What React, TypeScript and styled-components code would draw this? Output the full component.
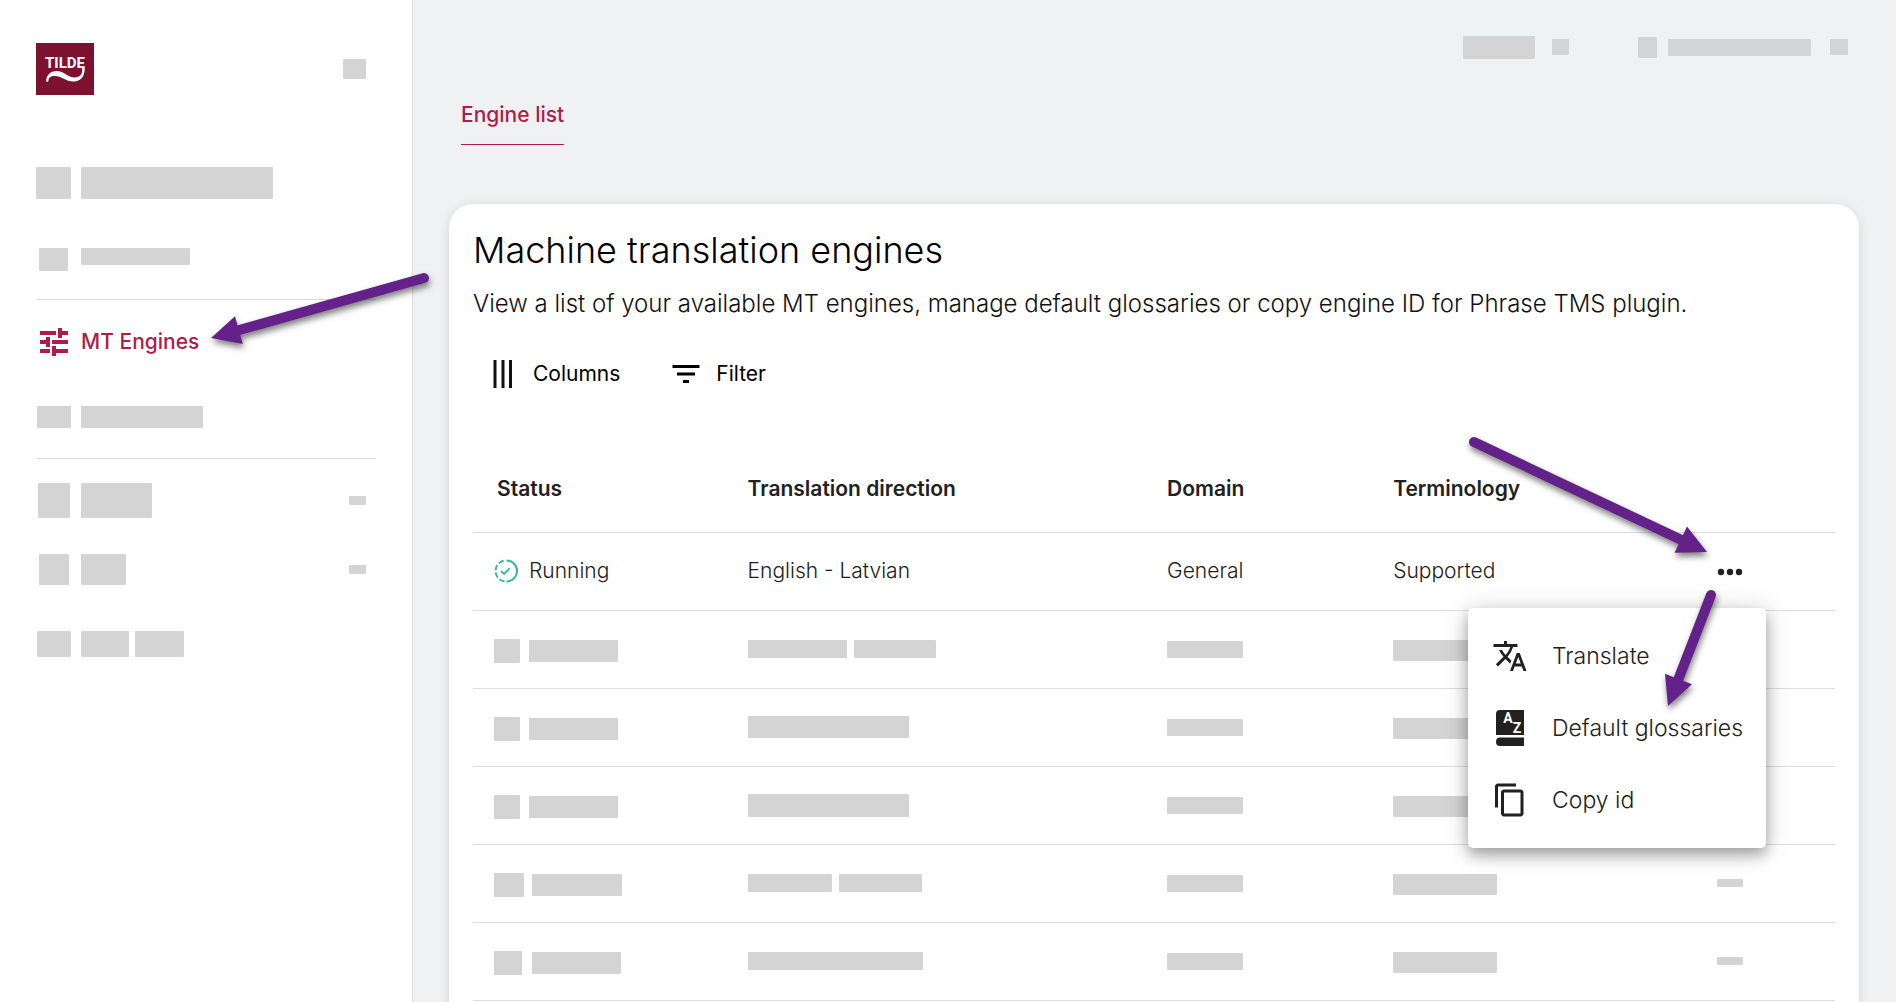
import React from 'react';
import styled, { createGlobalStyle } from 'styled-components';
import { MdTranslate, MdOutlineContentCopy, MdFilterList } from 'react-icons/md';

const GlobalStyle = createGlobalStyle`
  * { box-sizing: border-box; }
  body {
    margin: 0;
    background: #f0f1f3;
    color: #212121;
    font-family: Inter, "Liberation Sans", sans-serif;
    overflow: hidden;
  }
  a { color: inherit; text-decoration: none; }
  button {
    border: 0;
    padding: 0;
    background: none;
    color: inherit;
    font: inherit;
    cursor: pointer;
  }
`;

const Page = styled.div`
  position: relative;
  display: flex;
  height: 100vh;
  overflow: hidden;
`;

const Sidebar = styled.aside`
  flex: 0 0 413px;
  background: #fff;
  border-right: 1px solid #dcdee1;
  padding: 43px 36px 0;
`;

const Bone = styled.span<{ $w: number; $h: number }>`
  display: block;
  flex: none;
  width: ${(p) => p.$w}px;
  height: ${(p) => p.$h}px;
  border-radius: 1px;
  background: #d4d4d4;
`;

const Brand = styled.div`
  display: flex;
  align-items: center;
  justify-content: space-between;
  height: 52px;
  padding-right: 10px;
  margin-bottom: 72px;

  svg { display: block; }
`;

const NavRow = styled.div<{ $h: number; $gap: number; $top?: boolean }>`
  display: flex;
  align-items: ${(p) => (p.$top ? 'flex-start' : 'center')};
  height: ${(p) => p.$h}px;
  margin-bottom: ${(p) => p.$gap}px;
  padding-right: 10px;
`;

const NavIcon = styled.span`
  display: flex;
  flex: 0 0 35px;
  justify-content: center;
  margin-right: 10px;
`;

const NavLabel = styled.span`
  display: flex;
  flex: 1;
  gap: 6px;
`;

const Divider = styled.hr<{ $gap: number }>`
  height: 1px;
  border: 0;
  margin: 0 0 ${(p) => p.$gap}px;
  background: #dcdcdc;
`;

const NavLink = styled.a`
  display: flex;
  align-items: center;
  height: 36px;
  margin-bottom: 46px;
  color: #b01c48;
  font-size: 21px;
  font-weight: 500;
  line-height: 24px;
`;

const Main = styled.main`
  flex: 1;
  min-width: 0;
  padding: 0 37px 0 36px;
`;

const TopBar = styled.div`
  display: flex;
  justify-content: flex-end;
  align-items: center;
  height: 60px;
  padding: 34px 11px 0 0;
`;

const TopGroup = styled.div<{ $gap: number; $end: number }>`
  display: flex;
  align-items: center;
  gap: ${(p) => p.$gap}px;
  margin-right: ${(p) => p.$end}px;
`;

const Tabs = styled.nav`
  display: flex;
  padding: 43px 12px 59px;
`;

const Tab = styled.a`
  border-bottom: 1px solid #b01c48;
  padding-bottom: 17px;
  color: #b01c48;
  font-size: 21px;
  font-weight: 500;
  line-height: 24px;
`;

const Card = styled.section`
  min-height: 900px;
  padding: 24px;
  border-radius: 24px;
  background: #fff;
  box-shadow: 0 2px 12px rgba(0, 0, 0, 0.12);
`;

const Title = styled.h1`
  margin: 0 0 16px;
  color: #000;
  font-size: 36px;
  font-weight: 300;
  line-height: 44px;
`;

const Intro = styled.p`
  margin: 0 0 36px;
  color: #111;
  font-size: 24px;
  font-weight: 300;
  line-height: 32px;
  white-space: nowrap;
`;

const Tools = styled.div`
  display: flex;
  gap: 48px;
  padding-left: 18px;
  margin-bottom: 62px;
  color: #000;
  font-size: 21px;
  line-height: 24px;
`;

const Tool = styled.button`
  display: flex;
  align-items: center;
  gap: 12px;
  height: 36px;
`;

const Table = styled.table`
  width: 100%;
  table-layout: fixed;
  border-collapse: collapse;
  font-size: 21px;
  line-height: 24px;
  font-weight: 300;
`;

const HeadCell = styled.th`
  height: 78px;
  padding: 0 24px 8px;
  border-bottom: 1px solid #dcdee1;
  text-align: left;
  font-weight: 600;
`;

const Cell = styled.td<{ $low?: boolean }>`
  position: relative;
  height: 78px;
  padding: ${(p) => (p.$low ? 3 : 0)}px 24px 0;
  border-bottom: 1px solid #dcdee1;
`;

const Line = styled.div<{ $gap?: number }>`
  display: flex;
  align-items: center;
  gap: ${(p) => p.$gap ?? 7}px;
`;

const StatusLine = styled(Line)`
  margin-left: -3px;
`;

const MoreButton = styled.button`
  display: flex;
  margin: 0 auto;
  padding-left: 5px;
`;

const Menu = styled.div`
  position: absolute;
  z-index: 1;
  top: 75px;
  right: 69px;
  width: 298px;
  padding: 12px 0;
  border-radius: 5px;
  background: #fff;
  box-shadow: 0 7px 14px rgba(0, 0, 0, 0.3), 0 2px 28px rgba(0, 0, 0, 0.16);
`;

const MenuItem = styled.button`
  display: flex;
  align-items: center;
  gap: 24px;
  width: 100%;
  height: 72px;
  padding-left: 24px;
  font-size: 23px;
  font-weight: 300;
  line-height: 28px;
  white-space: nowrap;

  svg { flex: none; }
`;

const Arrows = styled.svg`
  position: absolute;
  z-index: 2;
  top: 0;
  left: 0;
  pointer-events: none;
  overflow: visible;
  filter: drop-shadow(1px 4px 3px rgba(0, 0, 0, 0.5));
`;

const LogoText = styled.text`
  fill: #fff;
  font-family: Roboto, "Liberation Sans", sans-serif;
  font-size: 15px;
  font-weight: 700;
`;

const GlossaryLetter = styled.text`
  fill: #fff;
  font-family: Roboto, "Liberation Sans", sans-serif;
  font-size: 14px;
  font-weight: 700;
`;

const TildeLogo = () => (
  <svg width="58" height="52" viewBox="0 0 58 52" role="img" aria-label="Tilde">
    <rect width="58" height="52" fill="#7c1230" />
    <LogoText x="29" y="25" textAnchor="middle">TILDE</LogoText>
    <path
      d="M10 38.500C10.500 32 14.500 28 20.500 28C28 28 32 34.500 38.500 34.500C44 34.500 47 31 46 25L48.700 24.500C49 33 45 38.500 37.500 38.500C29.500 38.500 26 33 18.500 33C14.500 33 12.500 34.500 12.300 38.700Z"
      fill="#fff"
    />
  </svg>
);

const TuneIcon = () => (
  <svg width="28" height="28" viewBox="0 0 28 28" fill="currentColor" aria-hidden="true">
    <path d="M0 3H16V7H0ZM18 0H22V3H28V7H22V10H18Z" />
    <path d="M0 12H6V9H10V19H6V16H0ZM12 12H28V16H12Z" />
    <path d="M0 21H10V25H0ZM12 18H16V21H28V25H16V28H12Z" />
  </svg>
);

const ColumnsIcon = () => (
  <svg width="30" height="36" viewBox="0 0 30 36" aria-hidden="true">
    <path d="M4 4V32M12 4V32M19.500 4V32" stroke="#111" strokeWidth="3" />
  </svg>
);

const RunningIcon = () => (
  <svg width="24" height="24" viewBox="0 0 24 24" fill="none" stroke="#39b8a6" aria-hidden="true">
    <path d="M12.500 1.500A10.500 10.500 0 0 1 12.500 22.500" strokeWidth="2" />
    <path d="M10.500 22.400A10.500 10.500 0 0 1 1.500 12A10.500 10.500 0 0 1 10.500 1.600" strokeWidth="2" strokeDasharray="5.600 2.200" />
    <path d="M7 12L10.200 15L15.800 9.200" strokeWidth="1.800" />
  </svg>
);

const DotsIcon = () => (
  <svg width="26" height="12" viewBox="0 0 26 12" fill="#212121" aria-hidden="true">
    <circle cx="4" cy="7" r="3.200" />
    <circle cx="13" cy="7" r="3.200" />
    <circle cx="22" cy="7" r="3.200" />
  </svg>
);

const GlossaryIcon = () => (
  <svg width="36" height="36" viewBox="0 0 36 36" aria-hidden="true">
    <path d="M8 0H32V25H4V4Q4 0 8 0Z" fill="#212121" />
    <path d="M8 27.500H32V36H8Q4 36 4 31.700Q4 27.500 8 27.500Z" fill="#212121" />
    <GlossaryLetter x="16" y="13" textAnchor="middle">A</GlossaryLetter>
    <GlossaryLetter x="25" y="23" textAnchor="middle">Z</GlossaryLetter>
  </svg>
);

type EngineRow = { icon: number; label: number; direction: number[]; dirH: number; gap: number; action: boolean };

const engines: EngineRow[] = [
  { icon: 26, label: 89, direction: [99, 82], dirH: 18, gap: 9, action: false },
  { icon: 26, label: 89, direction: [161], dirH: 22, gap: 9, action: false },
  { icon: 26, label: 89, direction: [161], dirH: 23, gap: 9, action: false },
  { icon: 30, label: 90, direction: [84, 83], dirH: 18, gap: 8, action: true },
  { icon: 28, label: 89, direction: [175], dirH: 18, gap: 10, action: true },
];

const Arrow = ({ from, to }: { from: [number, number]; to: [number, number] }) => {
  const dx = to[0] - from[0];
  const dy = to[1] - from[1];
  const length = Math.hypot(dx, dy);
  const angle = (Math.atan2(dy, dx) * 180) / Math.PI;
  return (
    <g transform={`translate(${from[0]} ${from[1]}) rotate(${angle})`}>
      <path d={`M0 0H${length - 24}`} stroke="#64218a" strokeWidth="10" strokeLinecap="round" />
      <path d={`M${length} 0L${length - 29} -14.500V14.500Z`} fill="#64218a" />
    </g>
  );
};

export default function App() {
  return (
    <>
      <GlobalStyle />
      <Page>
        <Sidebar>
          <Brand>
            <TildeLogo />
            <Bone $w={23} $h={20} />
          </Brand>
          <NavRow $h={32} $gap={49}>
            <NavIcon><Bone $w={35} $h={32} /></NavIcon>
            <NavLabel><Bone $w={192} $h={32} /></NavLabel>
          </NavRow>
          <NavRow $h={23} $gap={28} $top>
            <NavIcon><Bone $w={29} $h={23} /></NavIcon>
            <NavLabel><Bone $w={109} $h={17} /></NavLabel>
          </NavRow>
          <Divider $gap={24} />
          <NavLink href="#engines">
            <NavIcon><TuneIcon /></NavIcon>
            MT Engines
          </NavLink>
          <NavRow $h={22} $gap={30}>
            <NavIcon><Bone $w={34} $h={22} /></NavIcon>
            <NavLabel><Bone $w={122} $h={22} /></NavLabel>
          </NavRow>
          <Divider $gap={24} />
          <NavRow $h={35} $gap={36}>
            <NavIcon><Bone $w={32} $h={35} /></NavIcon>
            <NavLabel><Bone $w={71} $h={35} /></NavLabel>
            <Bone $w={17} $h={9} />
          </NavRow>
          <NavRow $h={31} $gap={46}>
            <NavIcon><Bone $w={30} $h={31} /></NavIcon>
            <NavLabel><Bone $w={45} $h={31} /></NavLabel>
            <Bone $w={17} $h={9} />
          </NavRow>
          <NavRow $h={26} $gap={0}>
            <NavIcon><Bone $w={34} $h={26} /></NavIcon>
            <NavLabel>
              <Bone $w={48} $h={26} />
              <Bone $w={49} $h={26} />
            </NavLabel>
          </NavRow>
        </Sidebar>

        <Main>
          <TopBar>
            <TopGroup $gap={17} $end={69}>
              <Bone $w={72} $h={23} />
              <Bone $w={17} $h={16} />
            </TopGroup>
            <TopGroup $gap={11} $end={19}>
              <Bone $w={19} $h={21} />
              <Bone $w={143} $h={17} />
            </TopGroup>
            <Bone $w={18} $h={16} />
          </TopBar>
          <Tabs>
            <Tab href="#list">Engine list</Tab>
          </Tabs>
          <Card>
            <Title>Machine translation engines</Title>
            <Intro>
              View a list of your available MT engines, manage default glossaries or copy engine ID for Phrase TMS plugin.
            </Intro>
            <Tools>
              <Tool type="button"><ColumnsIcon />Columns</Tool>
              <Tool type="button"><MdFilterList size={36} />Filter</Tool>
            </Tools>
            <Table>
              <colgroup>
                <col style={{ width: '18.4%' }} />
                <col style={{ width: '30.8%' }} />
                <col style={{ width: '16.6%' }} />
                <col style={{ width: '18.4%' }} />
                <col />
              </colgroup>
              <thead>
                <tr>
                  <HeadCell>Status</HeadCell>
                  <HeadCell>Translation direction</HeadCell>
                  <HeadCell>Domain</HeadCell>
                  <HeadCell>Terminology</HeadCell>
                  <HeadCell aria-label="Actions" />
                </tr>
              </thead>
              <tbody>
                <tr>
                  <Cell><StatusLine $gap={11}><RunningIcon />Running</StatusLine></Cell>
                  <Cell>English - Latvian</Cell>
                  <Cell>General</Cell>
                  <Cell>Supported</Cell>
                  <Cell>
                    <MoreButton type="button" aria-label="More actions"><DotsIcon /></MoreButton>
                    <Menu>
                      <MenuItem type="button"><MdTranslate size={36} />Translate</MenuItem>
                      <MenuItem type="button"><GlossaryIcon />Default glossaries</MenuItem>
                      <MenuItem type="button"><MdOutlineContentCopy size={36} />Copy id</MenuItem>
                    </Menu>
                  </Cell>
                </tr>
                {engines.map((row, i) => (
                  <tr key={i}>
                    <Cell $low>
                      <StatusLine $gap={row.gap}>
                        <Bone $w={row.icon} $h={24} />
                        <Bone $w={row.label} $h={22} />
                      </StatusLine>
                    </Cell>
                    <Cell>
                      <Line>{row.direction.map((w, n) => <Bone key={n} $w={w} $h={row.dirH} />)}</Line>
                    </Cell>
                    <Cell><Bone $w={76} $h={17} /></Cell>
                    <Cell $low><Bone $w={104} $h={21} /></Cell>
                    <Cell>
                      {row.action && <MoreButton type="button" aria-label="More actions"><Bone $w={26} $h={8} /></MoreButton>}
                    </Cell>
                  </tr>
                ))}
              </tbody>
            </Table>
          </Card>
        </Main>

        <Arrows width="1896" height="1002" viewBox="0 0 1896 1002" fill="none" aria-hidden="true">
          <Arrow from={[424, 278]} to={[211, 338]} />
          <Arrow from={[1474, 442]} to={[1707, 552]} />
          <Arrow from={[1711, 595]} to={[1668, 706]} />
        </Arrows>
      </Page>
    </>
  );
}
